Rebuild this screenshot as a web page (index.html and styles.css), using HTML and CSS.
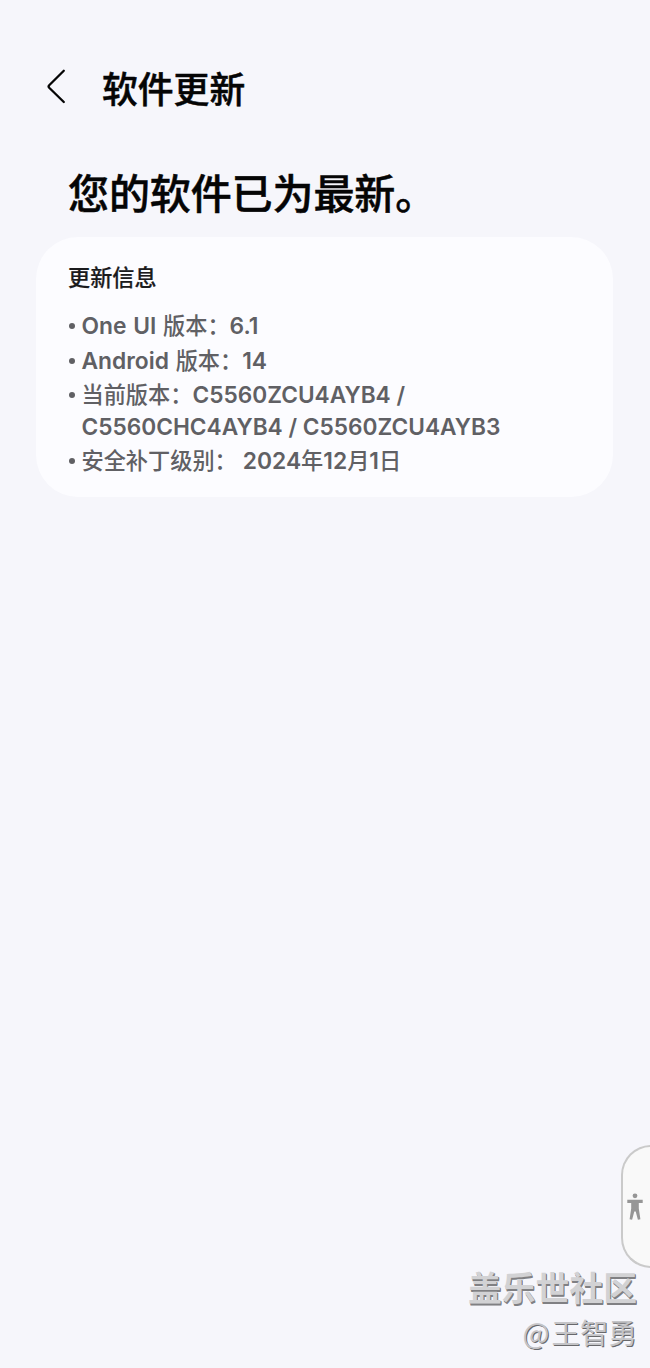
FILE: index.html
```html
<!DOCTYPE html>
<html lang="zh-CN">
<head>
<meta charset="utf-8">
<title>软件更新</title>
<link rel="stylesheet" href="styles.css">
</head>
<body>
<div class="screen">
  <header class="bar">
    <svg class="back" width="20" height="36" viewBox="0 0 20 36"><path d="M17.8 1.800 L3.200 16.200 Q2 17.500 3.200 18.800 L17.800 33"/></svg>
    <h1 class="title">软件更新</h1>
  </header>
  <h2 class="status">您的软件已为最新。</h2>
  <section class="card">
    <h3 class="card-title">更新信息</h3>
    <ul class="info">
      <li><span class="latin">One UI </span>版本：<span class="latin">6.1</span></li>
      <li><span class="latin">Android </span>版本：<span class="latin">14</span></li>
      <li>当前版本：<span class="latin code">C5560ZCU4AYB4 /</span><br><span class="latin code">C5560CHC4AYB4 / C5560ZCU4AYB3</span></li>
      <li class="patch">安全补丁级别： <span class="latin">2024</span>年<span class="latin">12</span>月<span class="latin">1</span>日</li>
    </ul>
  </section>
  <div class="handle">
    <svg width="18" height="28" viewBox="0 0 18 28"><circle cx="9" cy="2.800" r="2.400"/><path d="M1.300 6.800h15.400v3.200h-3.900v5.500l1.600 10.700-2.500.5-2.200-8.200h-1.400l-2.200 8.200-2.500-.5 1.600-10.700v-5.500H1.300z"/></svg>
  </div>
  <footer class="mark">
    <div class="community">盖乐世社区</div>
    <div class="author"><span class="at">@</span>王智勇</div>
  </footer>
</div>
</body>
</html>
```
FILE: styles.css
```css
* { box-sizing: border-box; }
body {
  margin: 0;
  background: #f6f6fb;
  font-family: "Noto Sans CJK SC", sans-serif;
}
.screen {
  position: relative;
  display: flex;
  flex-direction: column;
  height: 1368px;
  overflow: hidden;
}
h1, h2, h3, ul { margin: 0; padding: 0; }
.bar {
  display: flex;
  align-items: center;
  gap: 36px;
  height: 74px;
  margin: 50px 0 0 46px;
}
.back { fill: none; stroke: #050505; stroke-width: 2.3; stroke-linecap: round; stroke-linejoin: round; }
.title {
  font-size: 35.8px;
  line-height: 54px;
  font-weight: 500;
  color: #050505;
  -webkit-text-stroke: 0.5px #050505;
}
.status {
  margin: 37px 0 0 68px;
  font-size: 41px;
  line-height: 60px;
  font-weight: 500;
  letter-spacing: -0.1px;
  color: #050505;
  -webkit-text-stroke: 0.5px #050505;
}
.card {
  width: 577px;
  height: 260px;
  margin: 16px 0 0 36px;
  padding: 23px 32px 0;
  border-radius: 42px;
  background: #fcfcff;
}
.card-title {
  font-size: 22.2px;
  line-height: 32px;
  font-weight: 500;
  color: #1b1b1d;
  -webkit-text-stroke: 0.2px #1b1b1d;
}
.info {
  display: flex;
  flex-direction: column;
  gap: 3px;
  margin-top: 17px;
  list-style: none;
  font-size: 22.2px;
  line-height: 31.5px;
  font-weight: 500;
  color: #606064;
}
.info li { position: relative; padding-left: 13.5px; white-space: pre; }
.info li::before {
  content: "";
  position: absolute;
  left: 1px;
  top: 14px;
  width: 6px;
  height: 6px;
  border-radius: 50%;
  background: #606064;
}
.latin { font-family: Inter, "Noto Sans CJK SC", sans-serif; font-size: 22.8px; font-weight: 600; line-height: 1; word-spacing: 1px; }
.code { font-size: 22.7px; word-spacing: 0; }
.patch { word-spacing: 1px; }
.handle {
  position: absolute;
  left: 621px;
  top: 1145px;
  width: 30px;
  height: 123px;
  border: 2px solid #cacaca;
  border-right-width: 1px;
  border-radius: 30px 0 0 30px;
  background: #f9f9f9;
  padding: 46px 0 0 3px;
}
.handle svg { display: block; fill: #969696; }
.mark {
  margin-top: auto;
  padding: 0 13px 15px 0;
  text-align: right;
  color: #d2d2d4;
}
.community {
  font-size: 33.8px;
  line-height: 48px;
  font-weight: 700;
  text-shadow: 1px 1px 0 #808083, 1px 2px 0 #808083;
}
.author {
  font-size: 28.5px;
  line-height: 42px;
  font-weight: 400;
  color: #c4c4c7;
  text-shadow: 1px 1px 0 #68686b;
}
.at { margin-right: 2px; }
```
